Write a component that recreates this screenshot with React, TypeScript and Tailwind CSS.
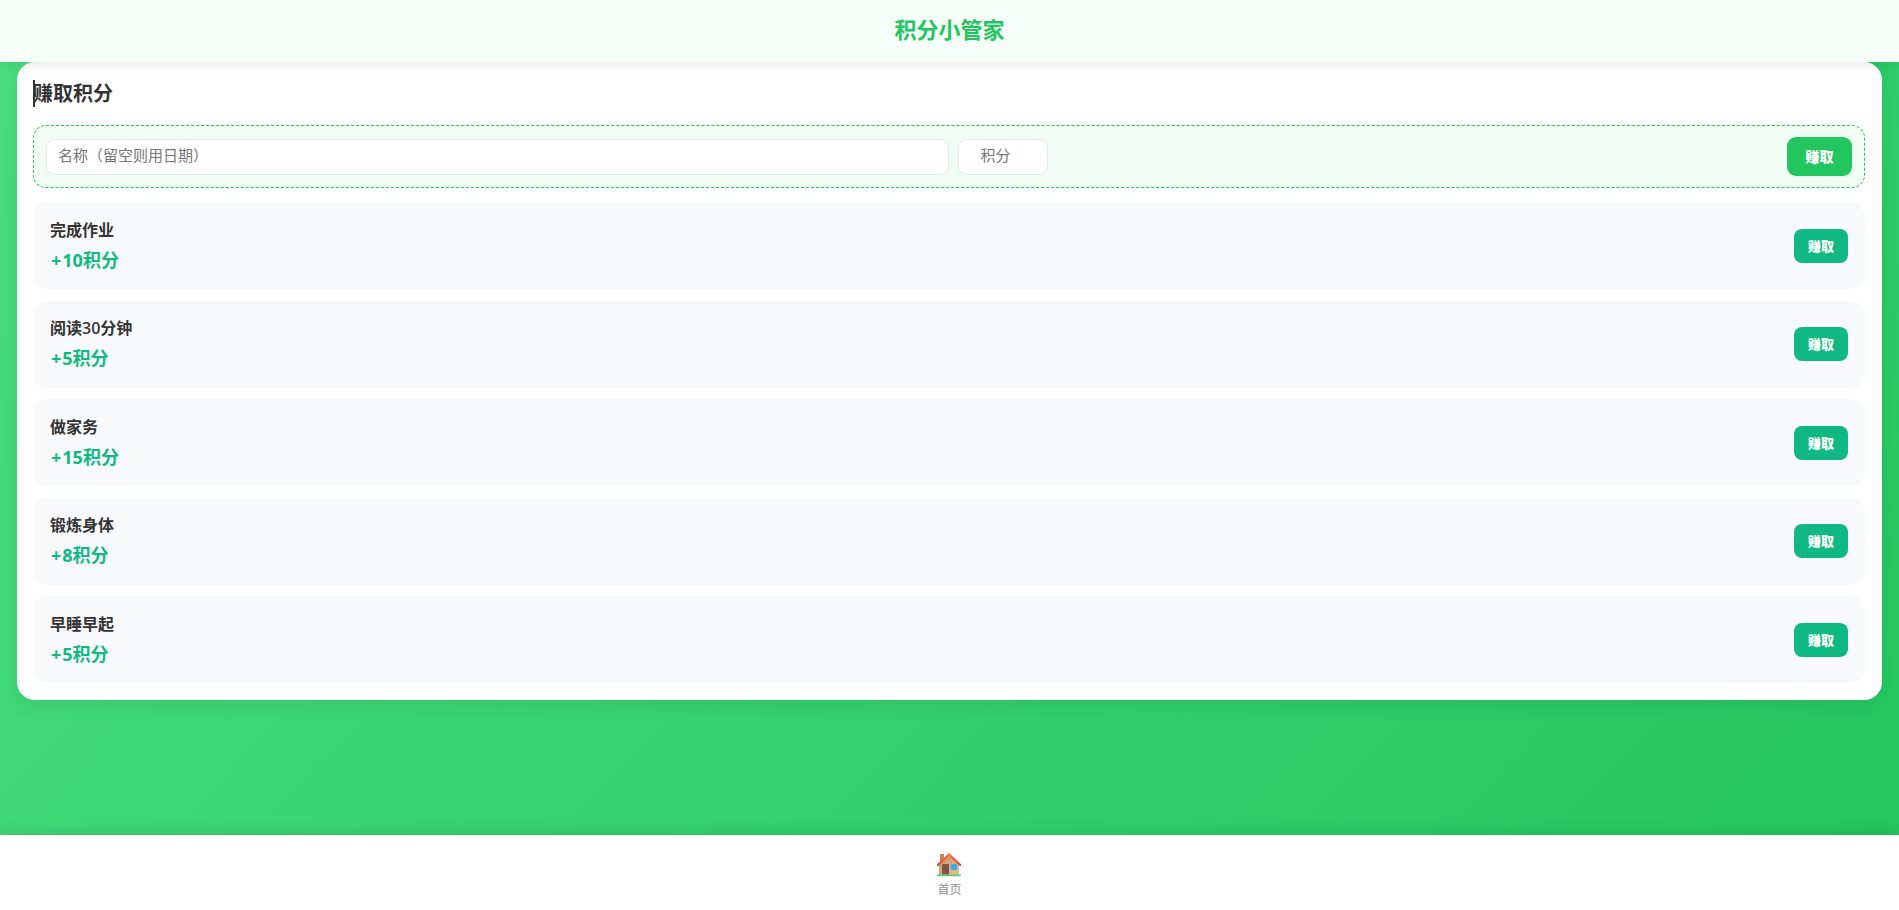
interface EarnTask {
    id: number;
    name: string;
    points: number;
}

const tasks: EarnTask[] = [
    { id: 1, name: "完成作业", points: 10 },
    { id: 2, name: "阅读30分钟", points: 5 },
    { id: 3, name: "做家务", points: 15 },
    { id: 4, name: "锻炼身体", points: 8 },
    { id: 5, name: "早睡早起", points: 5 },
];

function HouseIcon() {
    return (
        <svg className="w-6 h-6" viewBox="0 0 24 24" aria-hidden="true">
            <defs>
                <linearGradient id="wall" x1="0" y1="0" x2="1" y2="1">
                    <stop offset="0" stopColor="#c9935f" />
                    <stop offset="1" stopColor="#ecbc92" />
                </linearGradient>
                <linearGradient id="roof" x1="0" y1="0" x2="0" y2="1">
                    <stop offset="0" stopColor="#ff7a3d" />
                    <stop offset="1" stopColor="#d93a3a" />
                </linearGradient>
            </defs>
            <rect x="3" y="1" width="4" height="9" fill="#c08a4e" />
            <path d="M12 2.5 22 12v10H2V12z" fill="url(#wall)" />
            <path d="M12 0 24 11.3V13h-1.3L12 2.9 1.3 13H0V11.3z" fill="url(#roof)" />
            <rect x="5" y="11" width="7" height="10.6" rx="0.8" fill="#7d5550" />
            <circle cx="10.6" cy="17" r="0.6" fill="#4e342e" />
            <rect x="14" y="11" width="6" height="6" rx="0.6" fill="#35b0f5" />
            <rect x="0" y="21.6" width="24" height="1.6" rx="0.8" fill="#4fd07f" />
        </svg>
    );
}

function TaskRow({ task }: { task: EarnTask }) {
    return (
        <li className="flex items-center justify-between min-h-[87px] px-[17px] rounded-[14px] bg-[#f8f9fb]">
            <div>
                <div className="text-[16px] leading-[25px] font-semibold text-[#333]">{task.name}</div>
                <div className="mt-1 text-[18px] leading-[27px] font-bold text-[#10b981]">
                    <span className="mx-px">+</span>
                    {task.points}积分
                </div>
            </div>
            <button type="button" className="h-[34px] w-[54px] pt-0.5 rounded-lg bg-[#10b981] text-[13px] font-black text-white cursor-pointer">
                赚取
            </button>
        </li>
    );
}

export default function App() {
    return (
        <div className="min-h-screen flex flex-col bg-linear-[135deg,#4ade80,#22c55e] font-['Open_Sans','Noto_Sans_CJK_SC',sans-serif]">
            <header className="relative z-10 h-[62px] pb-1 flex items-center justify-center bg-[#f5fdf8] shadow-[0_2px_12px_rgba(0,0,0,0.1)]">
                <h1 className="text-[22px] leading-8 font-bold text-[#22c55e]">积分小管家</h1>
            </header>

            <main className="flex-1 px-[17px] pb-8">
                <section className="rounded-[18px] bg-white pl-4 pr-[17px] pt-[18px] pb-[17px] shadow-[0_4px_20px_rgba(0,0,0,0.08)]">
                    <h2 className="mb-[18px] text-[20px] leading-[27px] font-semibold text-[#333] shadow-[inset_2px_0_0_#333]">赚取积分</h2>

                    <form className="flex items-center gap-[9px] min-h-[63px] px-3 mb-[14px] rounded-[13px] border border-dashed border-[#22c55e] bg-[#f0fdf4]">
                        <input
                            type="text"
                            aria-label="名称"
                            placeholder="名称（留空则用日期）"
                            className="w-1/2 h-9 px-[11px] pb-1 rounded-[9px] border border-gray-200 bg-white text-[15px] placeholder:text-[#757575]"
                        />
                        <input
                            type="number"
                            aria-label="积分"
                            placeholder="积分"
                            className="w-[90px] h-9 px-[11px] pb-1 rounded-[9px] border border-gray-200 bg-white text-[15px] text-center placeholder:text-[#757575]"
                        />
                        <button type="button" className="ml-auto h-[39px] w-[65px] rounded-[9px] bg-[#22c55e] text-[14px] font-black text-white cursor-pointer">
                            赚取
                        </button>
                    </form>

                    <ul className="flex flex-col justify-between gap-[11px] min-h-[481px]">
                        {tasks.map((task) => (
                            <TaskRow key={task.id} task={task} />
                        ))}
                    </ul>
                </section>
            </main>

            <nav className="h-[75px] pt-1.5 flex items-center justify-center bg-white shadow-[0_-2px_12px_rgba(0,0,0,0.1)]">
                <a href="#home" className="flex flex-col items-center gap-1 text-[12px] leading-[18px] text-[#8e8e8e]">
                    <HouseIcon />
                    首页
                </a>
            </nav>
        </div>
    );
}
